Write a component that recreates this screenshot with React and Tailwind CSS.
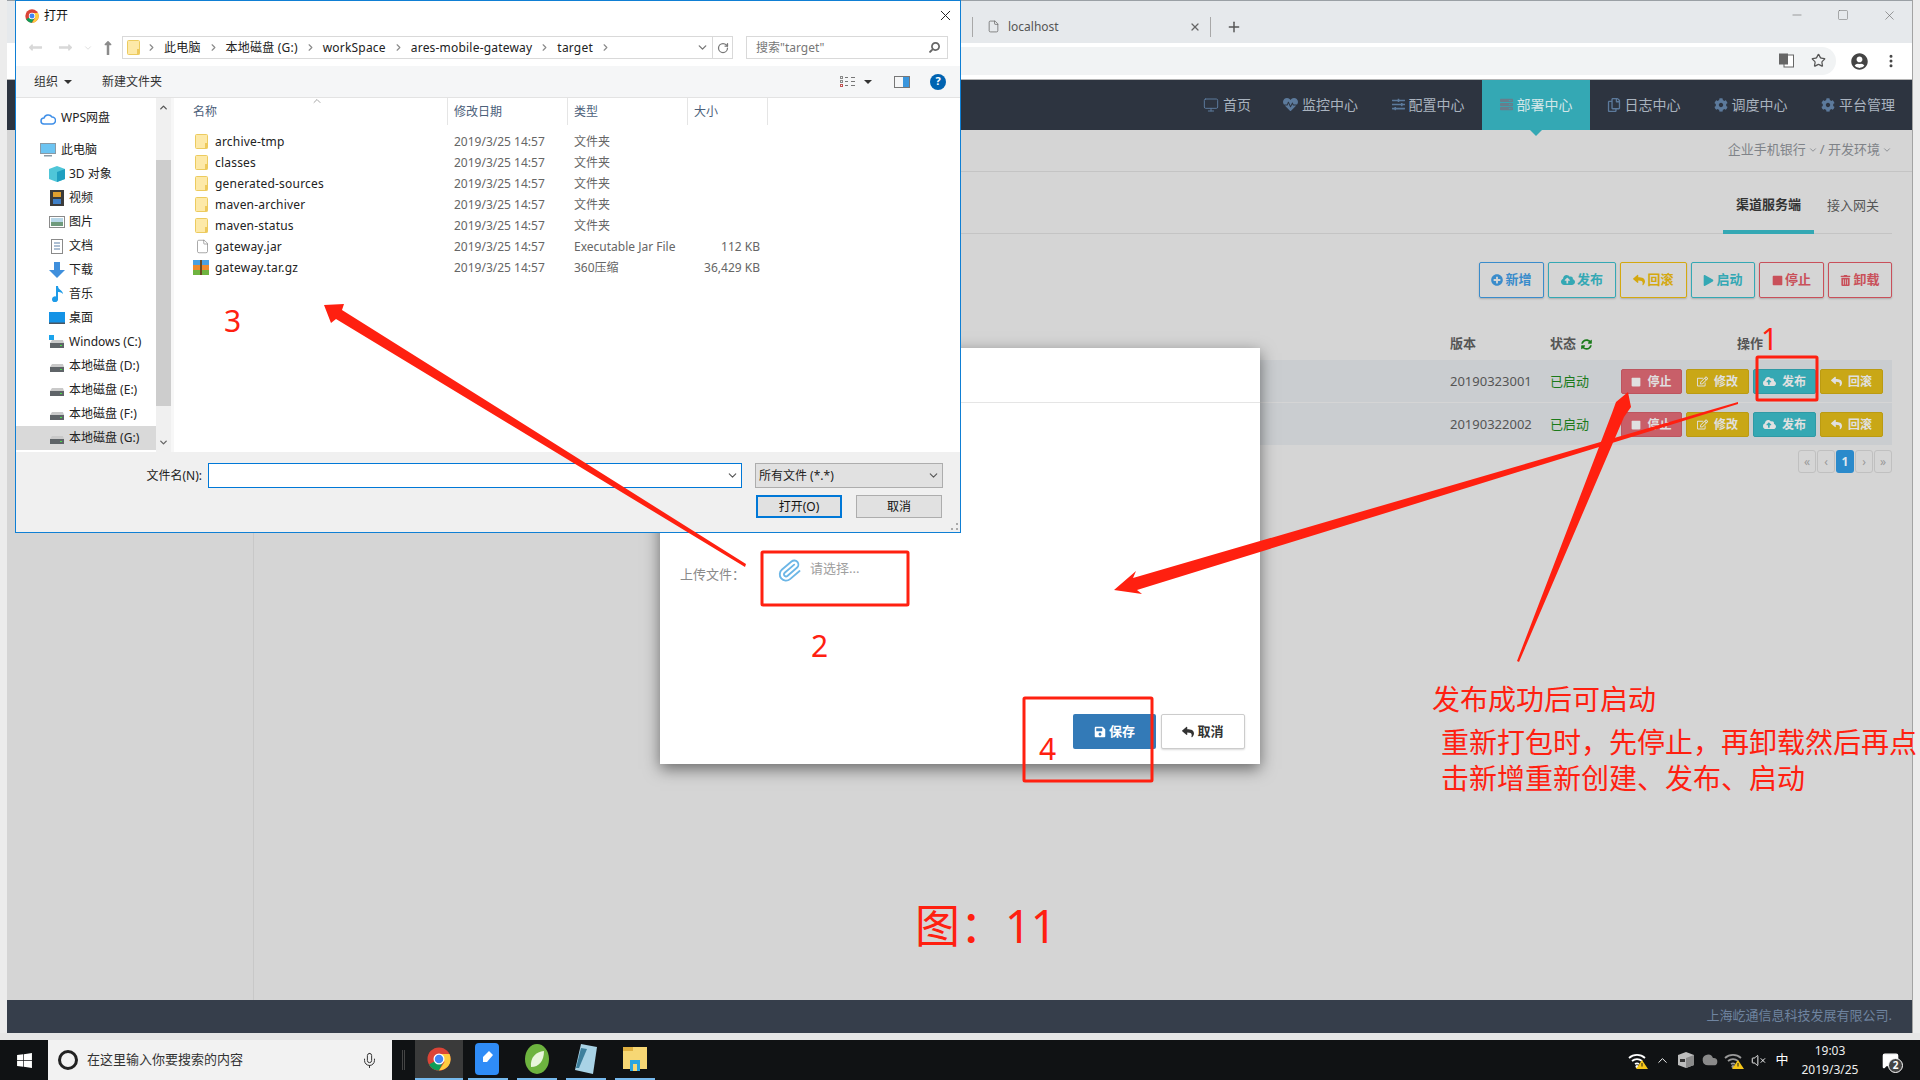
import React from 'react';
import {
  FaPlusCircle, FaCloudUploadAlt, FaReply, FaPlay, FaStop, FaTrashAlt, FaRegEdit, FaHeartbeat,
  FaSlidersH, FaServer, FaRegCopy, FaCog, FaSave, FaSyncAlt, FaWindows, FaUserCircle,
  FaLongArrowAltUp, FaLongArrowAltLeft, FaLongArrowAltRight, FaSearch,
} from 'react-icons/fa';
import { Monitor, ChevronDown, ChevronRight, ChevronUp, RotateCw, File, X, Plus, Star, Minus, Square, Mic, EllipsisVertical, VolumeX, MessageSquare, Paperclip, Cloud } from 'lucide-react';

const ChromeLogo = ({ size = 20 }) => (
  <svg width={size} height={size} viewBox="0 0 48 48">
    <circle cx="24" cy="24" r="23" fill="#db4437" />
    <path d="M24 24 L4 35 A23 23 0 0 0 24 47 L35 24 Z" fill="#0f9d58" />
    <path d="M24 14 H45 A23 23 0 0 1 24 47 L35 30 Z" fill="#ffcd40" />
    <circle cx="24" cy="24" r="11" fill="#fff" />
    <circle cx="24" cy="24" r="8.5" fill="#4285f4" />
  </svg>
);

const Folder = () => (
  <svg width="13" height="15" viewBox="0 0 13 15">
    <rect x="0.5" y="0.5" width="12" height="14" rx="1" fill="#fde9a8" stroke="#eccb5f" />
    <rect x="10" y="9" width="2.5" height="5.5" fill="#eec95c" />
  </svg>
);

const Drive = ({ win }) => (
  <svg width="16" height="14" viewBox="0 0 16 14">
    {win && <rect x="0" y="0" width="5" height="5" fill="#1aa3ec" />}
    <path d="M1 8 L3 5 H14 L15 8 Z" fill="#c9c9c9" />
    <rect x="1" y="8" width="14" height="5" fill="#5f6468" />
    <rect x="11" y="10" width="2" height="1" fill="#46e046" />
  </svg>
);

const WifiWarn = ({ color = '#fff' }) => (
  <svg width="20" height="18" viewBox="0 0 20 18">
    <g fill="none" stroke={color} strokeWidth="1.8">
      <path d="M1 7 A12 12 0 0 1 17 7" />
      <path d="M4 10 A8 8 0 0 1 14 10" />
      <path d="M7 13 A4 4 0 0 1 11 13" />
    </g>
    <circle cx="9" cy="15.5" r="1.5" fill={color} />
    <path d="M14 9 L20 18 H8 Z" fill="#f5c518" />
    <rect x="13.5" y="12" width="1" height="3.5" fill="#222" />
  </svg>
);

const NavItem = ({ icon, label, selected, top }) => (
  <div className={`flex items-center h-6 ${top ? 'pl-[24px] gap-[5px]' : 'pl-[33px] gap-[4px]'} ${selected ? 'bg-[#d9d9d9]' : ''}`}>
    <span className="w-[16px] h-[16px] flex items-center justify-center shrink-0">{icon}</span>
    <span className="text-[12px] text-[#222] whitespace-nowrap">{label}</span>
  </div>
);

const fileRows = [
  ['archive-tmp', '文件夹', ''],
  ['classes', '文件夹', ''],
  ['generated-sources', '文件夹', ''],
  ['maven-archiver', '文件夹', ''],
  ['maven-status', '文件夹', ''],
  ['gateway.jar', 'Executable Jar File', '112 KB'],
  ['gateway.tar.gz', '360压缩', '36,429 KB'],
];

const Crumb = ({ children }) => (
  <>
    <span className="text-[12px] tracking-[0.2px] text-[#222] whitespace-nowrap">{children}</span>
    <ChevronRight size={11} strokeWidth={2.5} className="text-[#8a8a8a] mx-[7px] shrink-0" />
  </>
);

const FileDialog = () => (
  <div className="absolute left-[15px] top-0 w-[946px] h-[533px] bg-white border border-[#0f7fd4] flex flex-col z-20">
    <div className="h-[31px] flex items-center pl-[9px] pr-[3px] pb-[2px] shrink-0">
      <ChromeLogo size={14} />
      <span className="ml-[5px] text-[12px] text-[#111]">打开</span>
      <X size={17} strokeWidth={1.4} className="ml-auto mr-[3px] text-[#222]" />
    </div>
    <div className="h-[23px] mt-[4px] flex items-center shrink-0">
      <div className="w-[106px] flex items-center pl-[12px] shrink-0">
        <FaLongArrowAltLeft size={15} className="text-[#d8d8d8]" />
        <FaLongArrowAltRight size={15} className="text-[#d8d8d8] ml-[15px]" />
        <ChevronDown size={10} className="text-[#d8d8d8] ml-[10px]" />
        <FaLongArrowAltUp size={16} className="text-[#8b8b8b] ml-[7px]" />
      </div>
      <div className="w-[611px] h-[23px] border border-[#d9d9d9] flex items-center pl-[4px] shrink-0">
        <Folder />
        <ChevronRight size={11} strokeWidth={2.5} className="text-[#8a8a8a] ml-[6px] mr-[7px]" />
        <Crumb>此电脑</Crumb>
        <Crumb>本地磁盘 (G:)</Crumb>
        <Crumb>workSpace</Crumb>
        <Crumb>ares-mobile-gateway</Crumb>
        <Crumb>target</Crumb>
        <div className="ml-auto flex items-center h-full">
          <ChevronDown size={13} strokeWidth={2.5} className="text-[#777] mr-[3px]" />
          <div className="h-full border-l border-[#d9d9d9] w-[20px] flex items-center justify-center">
            <RotateCw size={12} strokeWidth={2.5} className="text-[#777]" />
          </div>
        </div>
      </div>
      <div className="w-[202px] h-[23px] ml-[13px] border border-[#d9d9d9] flex items-center pl-[9px] pr-[7px] shrink-0">
        <span className="text-[12px] text-[#777]">搜索"target"</span>
        <FaSearch size={11} className="ml-auto text-[#666] -scale-x-100" />
      </div>
    </div>
    <div className="h-[32px] mt-[7px] bg-[#f5f6f7] border-b border-[#e3e3e3] flex items-center shrink-0 pl-[18px]">
      <span className="text-[12px] text-[#333]">组织</span>
      <span className="ml-[6px] w-0 h-0 border-x-[4px] border-x-transparent border-t-[4px] border-t-[#333]" />
      <span className="ml-[30px] text-[12px] text-[#333]">新建文件夹</span>
      <div className="ml-auto flex items-center pr-[14px]">
        <svg width="16" height="12" viewBox="0 0 16 12">
          <g fill="none" stroke="#888">
            <rect x="0.5" y="0.5" width="2" height="2" />
            <rect x="0.5" y="4.5" width="2" height="2" />
            <rect x="0.5" y="8.5" width="2" height="2" stroke="#c05050" />
          </g>
          <path d="M5 1.5H8M11 1.5H15M5 5.5H8M11 5.5H15M5 9.5H8M11 9.5H15" stroke="#777" />
        </svg>
        <span className="ml-[8px] w-0 h-0 border-x-[4px] border-x-transparent border-t-[4px] border-t-[#333]" />
        <div className="ml-[22px] w-[16px] h-[12px] border border-[#777] flex justify-end"><div className="w-[6px] bg-[#3a96dd]" /></div>
        <div className="ml-[20px] w-[16px] h-[16px] rounded-full bg-[#0063b1] text-white text-[11px] font-bold flex items-center justify-center">?</div>
      </div>
    </div>
    <div className="flex flex-1 min-h-0">
      <div className="w-[140px] shrink-0 pt-[8px] overflow-hidden">
        <NavItem top label="WPS网盘" icon={<svg width="16" height="13" viewBox="0 0 16 13"><path d="M4 12 A3 3 0 0 1 4 6 A4.5 4.5 0 0 1 12 5 A3.5 3.5 0 0 1 12 12 Z" fill="none" stroke="#3f8fe8" strokeWidth="1.5" /></svg>} />
        <div className="h-[8px]" />
        <NavItem top label="此电脑" icon={<svg width="16" height="14" viewBox="0 0 16 14"><rect x="0.5" y="0.5" width="15" height="10" fill="#6cc4f2" stroke="#8a9aa5" /><rect x="4" y="12" width="8" height="1.5" fill="#8a9aa5" /></svg>} />
        <NavItem label="3D 对象" icon={<svg width="16" height="16" viewBox="0 0 16 16"><path d="M8 0 L16 3 V13 L8 16 L0 13 V3 Z" fill="#4fc6d8" /><path d="M8 6 L16 3 V13 L8 16 Z" fill="#1f9fc0" /></svg>} />
        <NavItem label="视频" icon={<svg width="14" height="16" viewBox="0 0 14 16"><rect width="14" height="16" fill="#3b3b3b" /><rect x="3" y="2" width="8" height="5" fill="#e0a030" /><rect x="3" y="9" width="8" height="5" fill="#3f80c8" /></svg>} />
        <NavItem label="图片" icon={<svg width="16" height="12" viewBox="0 0 16 12"><rect x="0.5" y="0.5" width="15" height="11" fill="#fff" stroke="#8a8a8a" /><rect x="2" y="2" width="12" height="4" fill="#b8d7e8" /><rect x="2" y="6" width="12" height="4" fill="#6f9a7c" /></svg>} />
        <NavItem label="文档" icon={<svg width="12" height="15" viewBox="0 0 12 15"><rect x="0.5" y="0.5" width="11" height="14" fill="#fff" stroke="#8a8a8a" /><path d="M3 4H9M3 7H9M3 10H9" stroke="#5b7fa6" /></svg>} />
        <NavItem label="下载" icon={<svg width="16" height="16" viewBox="0 0 16 16"><path d="M5 0 H11 V8 H16 L8 16 L0 8 H5 Z" fill="#3f8fdc" /></svg>} />
        <NavItem label="音乐" icon={<svg width="12" height="16" viewBox="0 0 12 16"><path d="M5 0 H7 C7 4 12 4 12 8 C10 6 8 6 7 6 V13 A3 3 0 1 1 5 10.5 Z" fill="#1e9be8" /></svg>} />
        <NavItem label="桌面" icon={<svg width="16" height="12" viewBox="0 0 16 12"><rect width="16" height="12" fill="#1493e6" /><rect y="10.5" width="16" height="1.5" fill="#4a5560" /></svg>} />
        <NavItem label="Windows (C:)" icon={<Drive win />} />
        <NavItem label="本地磁盘 (D:)" icon={<Drive />} />
        <NavItem label="本地磁盘 (E:)" icon={<Drive />} />
        <NavItem label="本地磁盘 (F:)" icon={<Drive />} />
        <NavItem label="本地磁盘 (G:)" icon={<Drive />} selected />
      </div>
      <div className="w-[15px] shrink-0 bg-[#f0f0f0] flex flex-col items-center h-[354px]">
        <ChevronUp size={11} strokeWidth={3} className="text-[#555] mt-[4px]" />
        <div className="w-full h-[246px] bg-[#cdcdcd] mt-[47px]" />
        <ChevronDown size={11} strokeWidth={3} className="text-[#666] mt-[31px]" />
      </div>
      <div className="flex-1 border-l-[3px] border-[#f7f7f7] relative">
        <ChevronUp size={12} strokeWidth={1.5} className="absolute left-[137px] -top-[3px] text-[#888]" />
        <div className="flex h-[27px] items-center text-[12px] text-[#4c607a]">
          <div className="w-[274px] pl-[19px] h-full flex items-center border-r border-[#e5e5e5]">名称</div>
          <div className="w-[120px] pl-[6px] h-full flex items-center border-r border-[#e5e5e5]">修改日期</div>
          <div className="w-[120px] pl-[6px] h-full flex items-center border-r border-[#e5e5e5]">类型</div>
          <div className="w-[80px] pl-[6px] h-full flex items-center border-r border-[#e5e5e5]">大小</div>
        </div>
        <div className="pt-[6px]">
          {fileRows.map(([name, type, size], i) => (
            <div key={name} className="flex h-[21px] items-center text-[12px] text-[#666]">
              <div className="w-[274px] flex items-center pl-[21px] text-[#222]">
                <span className="w-[18px] flex">
                  {i < 5 && <Folder />}
                  {i === 5 && <File size={15} strokeWidth={1} className="text-[#777]" />}
                  {i === 6 && <svg className="-ml-[2px]" width="16" height="15" viewBox="0 0 16 15"><rect width="16" height="5" fill="#4aa0e0" /><rect y="5" width="16" height="5" fill="#ef8a2c" /><rect y="10" width="16" height="5" fill="#6fb33f" /><rect x="7" width="2" height="15" fill="#6b4a20" /></svg>}
                </span>
                <span className="ml-[2px] tracking-[0.2px] whitespace-nowrap">{name}</span>
              </div>
              <div className="w-[120px] pl-[6px]">2019/3/25 14:57</div>
              <div className="w-[120px] pl-[6px] whitespace-nowrap">{type}</div>
              <div className="w-[72px] text-right whitespace-nowrap">{size}</div>
            </div>
          ))}
        </div>
      </div>
    </div>
    <div className="h-[80px] bg-[#f0f0f0] shrink-0 relative">
      <div className="flex items-start pt-[11px]">
        <div className="w-[187px] h-[25px] flex items-center justify-end text-[12px] text-[#222] pr-[1px]">文件名(N):</div>
        <div className="w-[534px] h-[25px] ml-[5px] bg-white border border-[#0078d7] flex items-center justify-end pr-[2px]">
          <ChevronDown size={13} className="text-[#555]" />
        </div>
        <div className="flex flex-col ml-[13px]">
          <div className="w-[188px] h-[25px] bg-[#e1e1e1] border border-[#adadad] flex items-center pl-[3px] pr-[2px] text-[12px] text-[#222]">
            所有文件 (*.*)
            <ChevronDown size={13} className="ml-auto text-[#555]" />
          </div>
          <div className="flex mt-[7px] ml-[1px]">
            <div className="w-[86px] h-[23px] bg-[#e1e1e1] border-2 border-[#0078d7] flex items-center justify-center text-[12px] text-[#111]">打开(O)</div>
            <div className="w-[86px] h-[23px] ml-[14px] bg-[#e1e1e1] border border-[#adadad] flex items-center justify-center text-[12px] text-[#111]">取消</div>
          </div>
        </div>
      </div>
      <div className="absolute right-[2px] bottom-[2px] w-[7px] h-[7px] border-b-2 border-r-2 border-dotted border-[#aaa]" />
    </div>
  </div>
);

const navItems = [
  { label: '首页', icon: <Monitor size={16} strokeWidth={1.5} className="text-[#5c7a9c]" />, w: 'w-[80px]' },
  { label: '监控中心', icon: <FaHeartbeat size={15} className="text-[#5c7a9c]" />, w: 'w-[107px]' },
  { label: '配置中心', icon: <FaSlidersH size={13} className="text-[#5c7a9c]" />, w: 'w-[108px]' },
  { label: '部署中心', icon: <FaServer size={13} className="text-[#687d8c]" />, w: 'w-[108px]', active: true },
  { label: '日志中心', icon: <FaRegCopy size={14} className="text-[#5c7a9c]" />, w: 'w-[107px]' },
  { label: '调度中心', icon: <FaCog size={14} className="text-[#5c7a9c]" />, w: 'w-[107px]' },
  { label: '平台管理', icon: <FaCog size={14} className="text-[#5c7a9c]" />, w: 'w-[108px]' },
];

const topButtons = [
  { label: '新增', icon: <FaPlusCircle size={12} />, cls: 'w-[65px] border-[#3a8ccb] text-[#3a8ccb]' },
  { label: '发布', icon: <FaCloudUploadAlt size={14} />, cls: 'w-[68px] border-[#34a8b4] text-[#34a8b4]' },
  { label: '回滚', icon: <FaReply size={12} />, cls: 'w-[67px] border-[#d4a80f] text-[#d4a80f]' },
  { label: '启动', icon: <FaPlay size={11} />, cls: 'w-[64px] border-[#34a8b4] text-[#34a8b4]' },
  { label: '停止', icon: <FaStop size={11} />, cls: 'w-[65px] border-[#c9505a] text-[#c9505a]' },
  { label: '卸载', icon: <FaTrashAlt size={11} />, cls: 'w-[64px] border-[#c9505a] text-[#c9505a]' },
];

const rowButtons = [
  { label: '停止', icon: <FaStop size={10} />, cls: 'w-[61px] bg-[#c85f69] border-[#bd555f]' },
  { label: '修改', icon: <FaRegEdit size={11} />, cls: 'w-[63px] bg-[#c9a716] border-[#bb9b12]' },
  { label: '发布', icon: <FaCloudUploadAlt size={13} />, cls: 'w-[63px] bg-[#35a8b3] border-[#2f9aa5]' },
  { label: '回滚', icon: <FaReply size={11} />, cls: 'w-[63px] bg-[#c9a716] border-[#bb9b12]' },
];

const rows = ['20190323001', '20190322002'];
const pager = ['«', '‹', '1', '›', '»'];

const BrowserWindow = () => (
  <div className="mx-[7px] h-[1033px] bg-[#d5d5d5] border-r border-[#a3a3a3] flex flex-col overflow-hidden">
    <div className="h-[43px] bg-[#e6e9ec] border-t border-[#9aa0a5] flex items-center shrink-0 relative">
      <div className="ml-[965px] h-[20px] mt-[9px] border-l border-[#a8a8a8] w-[239px] border-r flex items-center pl-[14px]">
        <File size={13} strokeWidth={1.4} className="text-[#666]" />
        <span className="ml-[8px] text-[12px] text-[#555]">localhost</span>
        <X size={12} strokeWidth={2.5} className="ml-auto mr-[9px] text-[#666]" />
      </div>
      <Plus size={16} strokeWidth={2.2} className="ml-[15px] mt-[9px] text-[#555]" />
      <div className="ml-auto flex items-center -mt-[14px] text-[#666]">
        <div className="w-[46px] flex justify-center"><Minus size={14} strokeWidth={1} /></div>
        <div className="w-[46px] flex justify-center"><Square size={12} strokeWidth={1} /></div>
        <div className="w-[46px] flex justify-center"><X size={15} strokeWidth={1} /></div>
      </div>
    </div>
    <div className="h-[37px] bg-white flex items-center shrink-0 border-b border-[#b5b5b5]">
      <div className="ml-[953px] mr-[2px] w-[876px] h-[28px] bg-[#f1f3f4] rounded-r-[14px] flex items-center justify-end pr-[10px] -mt-[1px]">
        <svg className="mr-[17px]" width="15" height="15" viewBox="0 0 15 15">
          <rect x="5" y="2" width="9.5" height="12" fill="#fff" stroke="#666" />
          <rect x="0" y="0.5" width="9" height="11" fill="#666" />
        </svg>
        <Star size={15} strokeWidth={2} className="text-[#555]" />
      </div>
      <FaUserCircle size={17} className="ml-[13px] text-[#444]" />
      <EllipsisVertical size={16} strokeWidth={2.5} className="ml-[15px] text-[#444]" />
    </div>
    <div className="h-[50px] bg-[#2d3440] flex justify-end shrink-0">
      {navItems.map((n) => (
        <div key={n.label} className={`${n.w} relative flex items-center justify-center gap-[4px] pb-[1px] text-[14px] ${n.active ? 'bg-[#34a8b4] text-[#d3e6e8]' : 'text-[#a9b3bf]'}`}>
          {n.icon}
          <span>{n.label}</span>
          {n.active && <span className="absolute left-1/2 -ml-[6px] top-full w-0 h-0 border-x-[6px] border-x-transparent border-t-[6px] border-t-[#34a8b4] z-10" />}
        </div>
      ))}
    </div>
    <div className="flex flex-1 min-h-0">
      <div className="w-[247px] shrink-0 border-r border-[#c8c8c8]" />
      <div className="flex-1 flex flex-col min-w-0">
        <div className="h-[42px] border-b border-[#c4c4c4] flex items-center justify-end pr-[20px] pb-[2px] text-[13px] text-[#7f8388] shrink-0">
          企业手机银行<ChevronDown size={10} className="mx-[2px]" />/ 开发环境<ChevronDown size={10} className="ml-[2px]" />
        </div>
        <div className="mr-[20px] h-[62px] border-b border-[#c4c4c4] flex justify-end items-end shrink-0 text-[13px]">
          <div className="w-[91px] h-[61px] pt-[6px] flex items-center justify-center border-b-4 border-[#34a8b4] font-bold text-[#333] -mb-px">渠道服务端</div>
          <div className="w-[78px] h-[61px] pt-[4px] flex items-center justify-center text-[#555] -mb-px">接入网关</div>
        </div>
        <div className="flex justify-end gap-[4px] mr-[20px] mt-[28px] shrink-0">
          {topButtons.map((b) => (
            <div key={b.label} className={`${b.cls} h-[36px] border rounded-[2px] flex items-center justify-center gap-[2px] text-[13px] font-bold shadow-[0_1px_2px_rgba(0,0,0,0.2)]`}>
              {b.icon}{b.label}
            </div>
          ))}
        </div>
        <div className="mx-[20px] mt-[36px] flex justify-end h-[20px] items-center text-[13px] font-bold text-[#555] shrink-0">
          <div className="w-[100px]">版本</div>
          <div className="w-[187px] flex items-center gap-[5px]">状态<FaSyncAlt size={11} className="text-[#1a7a1a]" /></div>
          <div className="w-[155px]">操作</div>
        </div>
        <div className="mx-[20px] mt-[6px] shrink-0">
          {rows.map((ver) => (
            <div key={ver} className="h-[42px] bg-[#cacdd0] mb-px flex justify-end items-center pr-[9px] pt-[1px]">
              <div className="w-[100px] text-[13px] text-[#555]">{ver}</div>
              <div className="w-[71px] text-[13px] text-[#1a7a1a]">已启动</div>
              <div className="flex gap-[4px]">
                {rowButtons.map((b) => (
                  <div key={b.label} className={`${b.cls} h-[25px] border rounded-[2px] flex items-center justify-center gap-[6px] text-[12px] font-bold text-[#e0e0e0]`}>
                    {b.icon}{b.label}
                  </div>
                ))}
              </div>
            </div>
          ))}
        </div>
        <div className="mr-[20px] mt-[4px] flex justify-end gap-[1px] shrink-0">
          {pager.map((p) => (
            <div key={p} className={`w-[18px] h-[23px] rounded-[3px] flex items-center justify-center text-[12px] ${p === '1' ? 'bg-[#2b8acb] text-[#dfe7ee] font-bold' : 'border border-[#c0c0c0] text-[#999]'}`}>{p}</div>
          ))}
        </div>
      </div>
    </div>
    <div className="h-[33px] bg-[#363e4b] shrink-0 flex items-center justify-end pr-[20px] pb-[1px] text-[13px] text-[#6f84a0]">上海屹通信息科技发展有限公司.</div>
  </div>
);

const DeployModal = () => (
  <div className="absolute left-[660px] top-[348px] w-[600px] h-[416px] bg-white shadow-[0_5px_15px_rgba(0,0,0,0.5)] flex flex-col z-10">
    <div className="h-[55px] border-b border-[#e5e5e5] shrink-0" />
    <div className="flex-1 relative">
      <div className="flex items-start mt-[156px] pl-[20px]">
        <span className="text-[13px] text-[#8a8a8a] w-[97px] mt-[6px]">上传文件：</span>
        <Paperclip size={25} strokeWidth={1.8} className="text-[#6cb6e6] -mt-[1px] rotate-[5deg]" />
        <span className="ml-[8px] text-[13px] text-[#a0a0a0]">请选择...</span>
      </div>
    </div>
    <div className="flex justify-end gap-[5px] pr-[15px] pb-[15px] shrink-0">
      <div className="w-[83px] h-[35px] bg-[#337ab7] rounded-[2px] flex items-center justify-center gap-[3px] text-white text-[13px] font-bold"><FaSave size={12} />保存</div>
      <div className="w-[84px] h-[35px] bg-white border border-[#cccccc] rounded-[2px] flex items-center justify-center gap-[3px] text-[#333] text-[13px] font-bold shadow-[0_1px_2px_rgba(0,0,0,0.15)]"><FaReply size={12} />取消</div>
    </div>
  </div>
);

const Annotations = () => (
  <>
    <svg className="absolute inset-0 z-30 pointer-events-none" width="1920" height="1080" viewBox="0 0 1920 1080">
      <g fill="#ff2010">
        <polygon points="746,564 342,310 344,304 324,305 331,323 336,319 745,567" />
        <polygon points="1738,402 1133,578 1136,571 1114,590 1142,594 1137,590 1738,404" />
        <polygon points="1517,661 1612,413 1616,402 1628,392 1631,407 1624,417 1519,662" />
      </g>
      <g fill="none" stroke="#ff2010" strokeWidth="3">
        <rect x="1757" y="357" width="60" height="43" rx="1" />
        <rect x="762" y="552" width="146" height="53" rx="1" />
        <rect x="1024" y="698" width="128" height="83" rx="1" />
      </g>
    </svg>
    <div className="absolute z-30 left-[1761px] top-[319px] text-[30px] leading-[40px] text-[#ff2010]">1</div>
    <div className="absolute z-30 left-[811px] top-[626px] text-[30px] leading-[40px] text-[#ff2010]">2</div>
    <div className="absolute z-30 left-[224px] top-[301px] text-[30px] leading-[40px] text-[#ff2010]">3</div>
    <div className="absolute z-30 left-[1039px] top-[729px] text-[30px] leading-[40px] text-[#ff2010]">4</div>
    <div className="absolute z-30 left-[1432px] top-[679px] text-[28px] leading-[40px] text-[#ff2010] whitespace-nowrap">发布成功后可启动</div>
    <div className="absolute z-30 left-[1441px] top-[722px] w-[479px] overflow-hidden text-[28px] leading-[40px] text-[#ff2010] whitespace-nowrap">重新打包时，先停止，再卸载然后再点</div>
    <div className="absolute z-30 left-[1441px] top-[758px] text-[28px] leading-[40px] text-[#ff2010] whitespace-nowrap">击新增重新创建、发布、启动</div>
    <div className="absolute z-30 left-[915px] top-[896px] text-[45px] leading-[60px] text-[#ff2010] whitespace-nowrap">图：11</div>
  </>
);

const taskIcons = [
  <svg key="doc" width="26" height="32" viewBox="0 0 26 32"><rect width="24" height="32" rx="4" fill="#2f8cf7" /><path d="M8 19 L8 14 L14 8 L18 12 L12 19 Z" fill="#fff" /></svg>,
  <svg key="spring" width="26" height="32" viewBox="0 0 26 32"><ellipse cx="13" cy="16" rx="12" ry="15" fill="#6db33f" /><path d="M7 24 C6 14 12 9 20 8 C20 18 15 24 7 24 Z" fill="#e8f5dc" /></svg>,
  <svg key="note" width="26" height="30" viewBox="0 0 26 30"><path d="M8 0 L24 3 L20 30 L2 26 Z" fill="#a9d3e6" /><path d="M8 4 L14 5 L6 24 L3 24 Z" fill="#3d7f9c" /></svg>,
  <svg key="files" width="24" height="24" viewBox="0 0 24 24"><rect width="24" height="22" fill="#f7d774" /><rect y="0" width="10" height="4" fill="#e0b040" /><rect x="7" y="13" width="10" height="11" fill="#2aa5e0" /><rect x="10" y="17" width="4" height="7" fill="#f7d774" /></svg>,
];

const Taskbar = () => (
  <div className="h-[40px] bg-[#101214] flex items-stretch shrink-0">
    <div className="w-[48px] flex items-center justify-center text-white"><FaWindows size={17} /></div>
    <div className="w-[344px] bg-[#f2f2f2] flex items-center pl-[10px] pr-[14px]">
      <div className="w-[20px] h-[20px] rounded-full border-[3px] border-[#222]" />
      <span className="ml-[9px] text-[13px] text-[#333]">在这里输入你要搜索的内容</span>
      <Mic size={17} strokeWidth={1.4} className="ml-auto text-[#333]" />
    </div>
    <div className="w-[23px] flex items-center justify-center"><div className="w-[3px] h-[20px] border-x border-[#444]" /></div>
    <div className="w-[48px] bg-[#3a3a3a] border-b-2 border-[#76b9ed] flex items-center justify-center"><ChromeLogo size={24} /></div>
    <div className="flex gap-[9px] ml-[5px]">
      {taskIcons.map((ic) => (
        <div key={ic.key} className="w-[40px] border-b-2 border-[#76b9ed] flex items-center justify-center">{ic}</div>
      ))}
    </div>
    <div className="ml-auto flex items-center text-white pr-[6px]">
      <div className="w-[24px] flex justify-center"><WifiWarn /></div>
      <div className="w-[24px] flex justify-center"><ChevronUp size={15} strokeWidth={1.5} /></div>
      <div className="w-[24px] flex justify-center">
        <svg width="16" height="16" viewBox="0 0 16 16"><path d="M8 0 L16 3 V13 L8 16 L0 13 V3 Z" fill="#bdbdbd" /><path d="M8 6 L16 3 V13 L8 16 Z" fill="#8a8a8a" /><rect x="2" y="7" width="5" height="3" fill="#333" /></svg>
      </div>
      <div className="w-[24px] flex justify-center"><Cloud size={16} fill="#8a8a8a" className="text-[#8a8a8a]" /></div>
      <div className="w-[24px] flex justify-center"><WifiWarn color="#9a9a9a" /></div>
      <div className="w-[24px] flex justify-center"><VolumeX size={15} strokeWidth={1.5} /></div>
      <div className="w-[24px] flex justify-center text-[13px]">中</div>
      <div className="w-[72px] flex flex-col items-center text-[12px] leading-[19px] text-[#eee]">
        <span>19:03</span>
        <span>2019/3/25</span>
      </div>
      <div className="w-[48px] flex justify-center relative">
        <MessageSquare size={17} fill="#fff" />
        <span className="absolute left-[22px] top-[6px] w-[15px] h-[15px] rounded-full bg-[#444] border border-white text-[10px] font-bold flex items-center justify-center">2</span>
      </div>
    </div>
  </div>
);

export default function App() {
  return (
    <div className="relative w-[1920px] h-[1080px] overflow-hidden bg-[#ececec] flex flex-col [font-family:'Noto_Sans','Noto_Sans_CJK_SC',sans-serif]">
      <BrowserWindow />
      <div className="h-[7px] bg-[#e6e6e6] shrink-0" />
      <Taskbar />
      <FileDialog />
      <DeployModal />
      <Annotations />
    </div>
  );
}
